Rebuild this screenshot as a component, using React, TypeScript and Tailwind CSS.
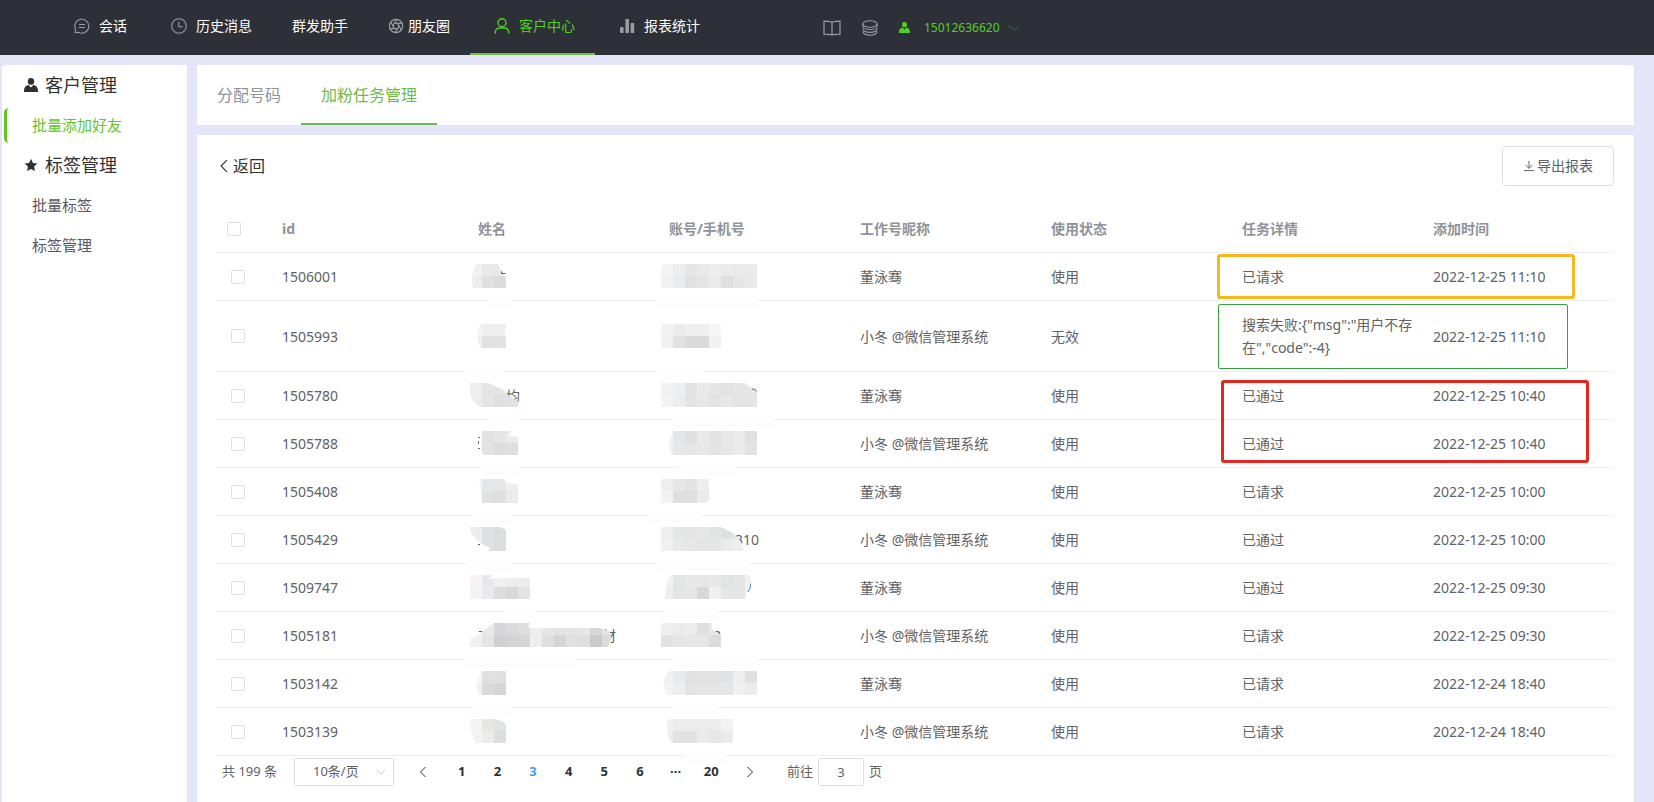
import React, { useId, useState } from "react";
import { Aperture } from "lucide-react";

type IconProps = { className?: string };

const ChatIcon = ({ className }: IconProps) => (
  <svg viewBox="0 0 16 16" className={className} fill="none" stroke="currentColor" strokeWidth="1.1" aria-hidden="true">
    <path d="M1.2 14.8 1.6 11.4A7 7 0 1 1 4.4 14.3Z" strokeLinejoin="round" />
    <path d="M5 6.5h6M5 9.5h6" />
  </svg>
);

const ClockIcon = ({ className }: IconProps) => (
  <svg viewBox="0 0 16 16" className={className} fill="none" stroke="currentColor" strokeWidth="1.1" aria-hidden="true">
    <circle cx="8" cy="8" r="7.3" />
    <path d="M7.8 3.8v4.9h4" />
  </svg>
);

const UserLineIcon = ({ className }: IconProps) => (
  <svg viewBox="0 0 16 16" className={className} fill="none" stroke="currentColor" strokeWidth="1.4" aria-hidden="true">
    <circle cx="8" cy="4.8" r="4" />
    <path d="M1.3 15.6v-1.4A4.2 4.2 0 0 1 5.5 10h5a4.2 4.2 0 0 1 4.2 4.2v1.4" />
  </svg>
);

const BarsIcon = ({ className }: IconProps) => (
  <svg viewBox="0 0 16 16" className={className} fill="currentColor" aria-hidden="true">
    <rect x="1" y="9" width="3.6" height="6" rx=".8" />
    <rect x="6.4" y="1" width="3.6" height="14" rx=".8" />
    <rect x="11.6" y="5" width="3.6" height="10" rx=".8" />
  </svg>
);

const BookIcon = ({ className }: IconProps) => (
  <svg viewBox="0 0 18 16" className={className} fill="none" stroke="currentColor" strokeWidth="1.2" aria-hidden="true">
    <path d="M9 2.2C6.500 1.500 4 1.200 1 1.200v13c3 0 5.500.2 8 .7 2.500-.5 5-.7 8-.7v-13c-3 0-5.500.3-8 1Zm0 0v12.600" strokeLinejoin="round" />
  </svg>
);

const CoinsIcon = ({ className }: IconProps) => (
  <svg viewBox="0 0 16 16" className={className} fill="none" stroke="currentColor" strokeWidth="1.1" aria-hidden="true">
    <ellipse cx="8" cy="4" rx="7.200" ry="3.200" />
    <path d="M.8 4v2.300c0 1.800 3.200 3.200 7.200 3.200s7.200-1.400 7.200-3.200V4" />
    <path d="M1.200 8.300C.5 10.500 3.500 12.400 8 12.400s7.500-1.900 6.800-4.100" />
    <path d="M1.200 11.200C.5 13.400 3.500 15.300 8 15.300s7.500-1.900 6.800-4.100" />
  </svg>
);

const PersonIcon = ({ className }: IconProps) => (
  <svg viewBox="0 0 14 14" className={className} fill="currentColor" aria-hidden="true">
    <ellipse cx="7" cy="3.400" rx="3.200" ry="3.400" />
    <path d="M4.600 6.900 7 9.600l2.400-2.700c2.600.6 4.300 2 4.600 5.100V14H0v-2c.3-3.100 2-4.500 4.600-5.100Z" />
  </svg>
);

const StarIcon = ({ className }: IconProps) => (
  <svg viewBox="0 0 14 14" className={className} fill="currentColor" aria-hidden="true">
    <path d="m7 .8 1.900 4.100 4.500.6-3.300 3.100.8 4.500L7 10.900l-3.900 2.200.8-4.500L.6 5.500l4.500-.6Z" />
  </svg>
);

const ArrowLine = ({ className, d }: IconProps & { d: string }) => (
  <svg viewBox="0 0 12 12" className={className} fill="none" stroke="currentColor" strokeWidth="1" aria-hidden="true">
    <path d={d} />
  </svg>
);

const LEFT = "M8.500 1 3.500 6l5 5";
const RIGHT = "M3.500 1l5 5-5 5";
const DOWN = "M1 3.500l5 5 5-5";

type NavItem = { label: string; icon?: React.ReactNode; tight?: boolean; active?: boolean };

const nav: NavItem[] = [
  { label: "会话", icon: <ChatIcon className="size-4" /> },
  { label: "历史消息", icon: <ClockIcon className="size-4" /> },
  { label: "群发助手" },
  { label: "朋友圈", icon: <Aperture className="size-4" strokeWidth={1.8} />, tight: true },
  { label: "客户中心", icon: <UserLineIcon className="size-4" />, active: true },
  { label: "报表统计", icon: <BarsIcon className="size-4" /> },
];

function TopBar() {
  return (
    <header className="flex h-[55px] shrink-0 items-stretch bg-[#2e3038] pl-[50px] text-sm text-white">
      <nav className="flex">
        {nav.map((item) => (
          <a
            key={item.label}
            href="#"
            className={
              item.active
                ? "flex items-center border-b-2 border-[#6fbf44] px-5 pb-0.5 whitespace-nowrap text-[#4fd01f]"
                : "flex items-center border-b-2 border-transparent px-5 pb-0.5 whitespace-nowrap"
            }
          >
            {item.icon && (
              <span
                className={
                  item.tight
                    ? "mr-1 text-[#9a9ca2]"
                    : item.active
                      ? "mr-[5px] flex w-6 justify-center"
                      : "mr-[5px] flex w-6 justify-center text-[#9a9ca2]"
                }
              >
                {item.icon}
              </span>
            )}
            {item.label}
          </a>
        ))}
      </nav>
      <div className="ml-[103px] flex items-center">
        <button type="button" aria-label="文档" className="text-[#9a9ca2]">
          <BookIcon className="h-4 w-[18px]" />
        </button>
        <button type="button" aria-label="数据" className="ml-[21px] text-[#9a9ca2]">
          <CoinsIcon className="size-4" />
        </button>
        <button type="button" className="ml-[21px] flex items-center text-xs text-[#4fd01f]">
          <PersonIcon className="size-[11px]" />
          <span className="ml-[14px]">15012636620</span>
          <ArrowLine className="ml-2 size-3 text-[#2f7a2a]" d={DOWN} />
        </button>
      </div>
    </header>
  );
}

function SideTitle({ icon, label }: { icon: React.ReactNode; label: string }) {
  return (
    <h2 className="flex h-10 items-center gap-[7px] pl-[22px] text-lg text-[#303133]">
      {icon}
      {label}
    </h2>
  );
}

function SideLink({ label, active }: { label: string; active?: boolean }) {
  return (
    <a
      href="#"
      className={
        active
          ? "flex h-10 items-center gap-6 pl-0.5 text-[15px] text-[#5fc52e]"
          : "flex h-10 items-center gap-6 pl-0.5 text-[15px] text-[#55585e]"
      }
    >
      {active ? (
        <svg viewBox="0 0 4 35" className="h-[35px] w-1" fill="#5fc71e" aria-hidden="true">
          <path d="M4 0Q0 1 0 5V30Q0 34 4 35 3 33 3 30V5Q3 2 4 0Z" />
        </svg>
      ) : (
        <span className="w-1" />
      )}
      {label}
    </a>
  );
}

type Mosaic = {
  top: string;
  bottom: string;
  clip: string;
  gap?: [number, number];
  mark?: { d: string; color: string };
  text?: React.ReactNode;
};

const dark = "#5a5d63";

const names: Mosaic[] = [
  { top: "f1f1f1 e9e9e9 e8e8e8", bottom: "ededed e0e0e1 dcdcdc", clip: "M6 0H28L32 8 36 14V24H3Q0 12 6 0Z", gap: [17, 43], mark: { d: "M31.500 7.500v2h4", color: dark } },
  { top: "f4f4f4 eeeeee eeeeee", bottom: "efefef e1e1e2 e2e2e2", clip: "M10 0H36V4L34 6 36 12V24H11Q4 12 10 0Z", gap: [-6, 33] },
  { top: "eeeeee e5e5e5 e4e4e4 e4e4e4", bottom: "eeeeee e5e5e5 dfdfdf e2e2e2", clip: "M0 0H18L34 7 36 11 48 18V24H10Q1 18 0 10Z", gap: [18, 48], text: <span className="pl-7">均</span> },
  { top: "eeeeee e2e2e4 e5e6ea ebebeb", bottom: "eeeeee e2e2e3 dddddd dfdfdf", clip: "M12 0H42L38 5 48 6V24H13L11 19Z", gap: [10, 50], mark: { d: "M8 6.500h2M8.500 10v3M8 17.500h2", color: "#8a6a5a" } },
  { top: "f4f4f4 e6e7ea e6e7ea eeeeee", bottom: "f4f4f4 e1e1e1 dfdfdf ebebeb", clip: "M9 0H34L36 4 48 5V24H12Z", gap: [2, 42] },
  { top: "ededed dedfe0 dcdddf", bottom: "f0f0f0 dfe0e0 dcddde", clip: "M0 0H30L36 3V24H18L20 21Q2 14 0 0Z", gap: [-5, 42], mark: { d: "M8 17.500h2", color: dark } },
  { top: "f7f5f4 e6e8ef f0f0f0 ededed ededed", bottom: "f5f3f3 e9e9ee dddddd d8d8d8 e4e4e4", clip: "M0 0H22L19 4Q40 2 60 3V24H0Z", gap: [33, 66] },
  {
    top: "f5f5f5 e9e9ea d7d7d9 dadadc dedede eeeeee e6e6e6 e4e4e4 e4e4e4 e6e6e6 d6d6d6 e4e4e4",
    bottom: "f1f1f1 e5e5e5 d0d0d1 d3d3d4 d6d6d6 eeeeee dfdfdf d5d5d5 e1e1e1 dfdfdf cacaca dcdcdc",
    clip: "M0 24V16L10 10 24 0H60L58 5H130L139 8Q144 13 138 24Z",
    gap: [-6, 106],
    text: <span className="flex w-[138px] justify-between"><span>丁</span><span>材</span></span>,
  },
  { top: "f5f5f5 e1e1e1 e0e0e1", bottom: "f1f1f1 dadada d6d6d6", clip: "M12 0H36V24H9Q3 12 12 0Z", gap: [2, 42] },
  { top: "f4f4f4 e8e6e2 e3e4e6", bottom: "f3f3f3 ececec dddee0", clip: "M0 0H24Q32 1 36 5V24H6Q0 14 0 0Z" },
];

const accounts: Mosaic[] = [
  { top: "f5f4f4 eeeeee e6e6e6 e9e9e9 ededed ebebeb e9eaea ebebeb", bottom: "f3f1f1 e9ecee e0e1e2 e5e5e5 eaeaea e0e0e0 e6e6e6 e9ebeb", clip: "M2 0H96V24H0V4Z", gap: [-6, 98] },
  { top: "f3f3f3 ebebeb efefef efefef f7f7f7", bottom: "f1f1f1 e2e2e2 dadada dadada f0f2f1", clip: "M0 0H60V24H0Z", gap: [-6, 42] },
  { top: "f3f2f2 eeeff1 e4e4e4 eaeaea e6e6e6 e2e2e2 e6e6e6 e6e6e6", bottom: "f5f4f4 ecedef e4e4e4 e8e8e8 e3e3e3 e8e8e8 e4e4e4 e4e4e4", clip: "M0 0H84L96 9V24H0Z", gap: [10, 114], mark: { d: "M91 6q4-.5 4.500 2.500", color: dark } },
  { top: "f2f2f2 e4e7ea dedfe0 e9e9ea e4e4e4 e7e7e7 ebebeb e1e1e1", bottom: "f0f0f0 e5e7e8 e6e6e7 e8e8e9 e4e4e4 e7e7e7 ebebeb e3e3e3", clip: "M12 0H96V24H11Q5 12 12 0Z", gap: [17, 75] },
  { top: "efeeee e7e7e8 e4e4e4 eeeeee", bottom: "f2f2f2 dfdfdf dfdfdf ebebeb", clip: "M0 0H48V21L45 24H0Z", gap: [-13, 42] },
  { top: "f1eeee e4e6e7 e5e6e6 e7e7e7 e3e5e5 dee0e2 e4e4e4", bottom: "f1f0f0 e9e9ea e7e7e7 e5e5e5 e3e5e6 ebebeb eeeeee", clip: "M0 0H60L72 6Q82 14 83 24H0Z", gap: [-6, 90], text: <span className="pl-[66px]">310</span> },
  { top: "f1f1f1 e4e6e6 e8e8e8 e7e7e7 e8e8e9 e2e3e3 e5e5e5 f0f2f2", bottom: "efefef e5e5e5 e6e6e6 d8d8d8 f0f0f0 e7e7e7 e5e5e5 efefef", clip: "M10 0H89V6L84 24H4Q4 8 10 0Z", gap: [2, 58], mark: { d: "M89.500 8.500Q90 13 87 17", color: "#5078b8" } },
  { top: "efefef ebebeb ececec e0e0e0 e8e8e8", bottom: "e2e2e2 e5e5e5 e7e7e7 e7e7e7 dcdcdc", clip: "M0 0H50L51 6 60 12V24H0Z", gap: [10, 98], text: <span className="pl-[44px]">8</span> },
  { top: "f1f1f1 e9eaec e1e2e3 e3e3e3 e2e3e5 e1e2e4 eeeeee e0e0e0", bottom: "f3f3f3 eeeeee e3e3e3 e5e5e5 e5e5e5 e5e5e5 f0f0f0 ececec", clip: "M8 0H96V24H6Q-2 12 8 0Z", gap: [10, 58] },
  { top: "f0f0f0 ececec ececec ececec ececec f2f2f2", bottom: "eeeeee e2e2e2 e2e2e2 ebebeb e7e7e7 ebebeb", clip: "M7 0H72V24H10Q4 12 7 0Z", gap: [23, 66] },
];

/** Pixelated block laid over a private value. */
function Masked({ data, tall }: { data: Mosaic; tall: boolean }) {
  const id = useId();
  const rows = [data.top.split(" "), data.bottom.split(" ")];
  return (
    <div className="relative h-[23px] pl-2.5">
      {data.text}
      <svg className="absolute -top-px left-0.5 h-6 w-[150px] overflow-visible" viewBox="0 0 150 24" aria-hidden="true">
        <clipPath id={id}>
          <path d={data.clip} />
        </clipPath>
        {data.gap && (
          <rect x={data.gap[0]} y={tall ? 42 : 32} width={data.gap[1] - data.gap[0]} height={tall ? 8 : 12} rx="3" fill="#fdfdfd" />
        )}
        <g clipPath={`url(#${id})`} shapeRendering="crispEdges">
          {rows.map((cells, r) =>
            cells.map((c, i) => <rect key={`${r}-${i}`} x={i * 12} y={r * 12} width="12" height="12" fill={`#${c}`} />),
          )}
        </g>
        {data.mark && <path d={data.mark.d} fill="none" stroke={data.mark.color} strokeWidth="1" />}
      </svg>
    </div>
  );
}

const A = "董泳骞";
const B = "小冬 @微信管理系统";

const records = [
  { id: "1506001", nick: A, state: "使用", detail: "已请求", time: "2022-12-25 11:10" },
  { id: "1505993", nick: B, state: "无效", detail: '搜索失败:{"msg":"用户不存在","code":-4}', time: "2022-12-25 11:10", tall: true },
  { id: "1505780", nick: A, state: "使用", detail: "已通过", time: "2022-12-25 10:40" },
  { id: "1505788", nick: B, state: "使用", detail: "已通过", time: "2022-12-25 10:40" },
  { id: "1505408", nick: A, state: "使用", detail: "已请求", time: "2022-12-25 10:00" },
  { id: "1505429", nick: B, state: "使用", detail: "已通过", time: "2022-12-25 10:00" },
  { id: "1509747", nick: A, state: "使用", detail: "已通过", time: "2022-12-25 09:30" },
  { id: "1505181", nick: B, state: "使用", detail: "已请求", time: "2022-12-25 09:30" },
  { id: "1503142", nick: A, state: "使用", detail: "已请求", time: "2022-12-24 18:40" },
  { id: "1503139", nick: B, state: "使用", detail: "已请求", time: "2022-12-24 18:40" },
];

const headings = ["姓名", "账号/手机号", "工作号昵称", "使用状态", "任务详情", "添加时间"];

const Check = ({ label }: { label: string }) => (
  <input
    type="checkbox"
    aria-label={label}
    className="block size-3.5 appearance-none rounded-[2px] border border-[#dcdfe6] bg-white checked:border-[#409eff] checked:bg-[#409eff]"
  />
);

function TaskTable() {
  const cell = "border-b border-[#ebeef5] px-2.5 py-3";
  return (
    <div className="relative mt-[19px]">
      <table className="w-full table-fixed border-separate border-spacing-0 text-left text-sm leading-[23px] text-[#606266]">
        <thead className="text-[#909399]">
          <tr>
            <th className={`${cell} w-[55px]`}>
              <Check label="全选" />
            </th>
            <th className={`${cell} w-[196px]`}>id</th>
            {headings.map((h) => (
              <th key={h} className={cell}>
                {h}
              </th>
            ))}
          </tr>
        </thead>
        <tbody>
          {records.map((r, i) => (
            <tr key={r.id}>
              <td className="border-b border-[#ebeef5] py-3 pl-3.5">
                <Check label={r.id} />
              </td>
              <td className={cell}>{r.id}</td>
              <td className="border-b border-[#ebeef5] py-3">
                <Masked data={names[i]} tall={!!r.tall} />
              </td>
              <td className="border-b border-[#ebeef5] py-3">
                <Masked data={accounts[i]} tall={!!r.tall} />
              </td>
              <td className={cell}>{r.nick}</td>
              <td className={cell}>{r.state}</td>
              <td className={cell}>{r.detail}</td>
              <td className={cell}>{r.time}</td>
            </tr>
          ))}
        </tbody>
      </table>
      <div className="pointer-events-none absolute top-[49px] right-[39px] h-[45px] w-[358px] rounded-[3px] border-3 border-[#f5b81f]" />
      <div className="pointer-events-none absolute top-[99px] right-[46px] h-[65px] w-[350px] rounded-[2px] border border-[#35a03c]" />
      <div className="pointer-events-none absolute top-[175px] right-[25px] h-[83px] w-[368px] rounded-[3px] border-3 border-[#e4261d]" />
    </div>
  );
}

function Pagination() {
  const [page, setPage] = useState("3");
  return (
    <div className="mt-0.5 flex h-7 items-center pl-[5px] text-[13px] text-[#606266]">
      <span className="w-[72px] whitespace-nowrap">共 199 条</span>
      <div className="relative">
        <select
          aria-label="每页条数"
          className="h-7 w-[100px] appearance-none rounded-[3px] border border-[#dcdfe6] bg-white pl-[18px] outline-none"
        >
          <option>10条/页</option>
        </select>
        <ArrowLine className="pointer-events-none absolute top-[9px] right-2 size-2.5 text-[#c0c4cc]" d={DOWN} />
      </div>
      <button type="button" aria-label="上一页" className="ml-3 flex w-[34px] justify-center text-[#303133]">
        <ArrowLine className="size-3" d={LEFT} />
      </button>
      <div className="ml-1 flex w-[285px] font-bold text-[#303133]">
        {["1", "2", "3", "4", "5", "6", "···", "20"].map((p) => (
          <button key={p} type="button" onClick={() => p !== "···" && setPage(p)} className={p === page ? "flex-1 text-[#409eff]" : "flex-1"}>
            {p}
          </button>
        ))}
      </div>
      <button type="button" aria-label="下一页" className="ml-1 flex w-[34px] justify-center text-[#303133]">
        <ArrowLine className="size-3" d={RIGHT} />
      </button>
      <label className="ml-5 flex items-center gap-[5px] whitespace-nowrap">
        前往
        <input
          value={page}
          onChange={(e) => setPage(e.target.value)}
          className="h-7 w-[46px] rounded-[3px] border border-[#dcdfe6] bg-white text-center outline-none"
        />
        页
      </label>
    </div>
  );
}

export default function App() {
  return (
    <div className="flex min-h-screen flex-col bg-[#e4e5f9] font-['Noto_Sans','Noto_Sans_CJK_SC',sans-serif]">
      <TopBar />
      <div className="flex flex-1 gap-2.5 pt-2.5 pr-5 pl-0.5">
        <aside className="w-[185px] shrink-0 rounded-tl bg-white">
          <SideTitle icon={<PersonIcon className="size-3.5" />} label="客户管理" />
          <SideLink label="批量添加好友" active />
          <SideTitle icon={<StarIcon className="size-3.5" />} label="标签管理" />
          <SideLink label="批量标签" />
          <SideLink label="标签管理" />
        </aside>
        <main className="flex min-w-0 flex-1 flex-col gap-2.5">
          <nav className="flex h-[60px] rounded-tr bg-white text-base">
            <a href="#" className="flex items-center border-b-2 border-transparent px-5 pt-0.5 text-[#909399]">
              分配号码
            </a>
            <a href="#" className="flex items-center border-b-2 border-[#6fb558] px-5 pt-0.5 text-[#6dbb4b]">
              加粉任务管理
            </a>
          </nav>
          <section className="flex-1 bg-white px-5 pt-[11px]">
            <div className="flex h-10 items-center justify-between">
              <a href="#" className="flex items-center gap-0.5 text-base text-[#303133]">
                <ArrowLine className="size-3.5" d={LEFT} />
                返回
              </a>
              <button
                type="button"
                className="flex h-10 items-center gap-0.5 rounded border border-[#dcdfe6] bg-white px-5 text-sm text-[#606266]"
              >
                <ArrowLine className="size-3" d="M6 .8v7.400M2.500 5 6 8.400 9.500 5M.8 10.600h10.400" />
                导出报表
              </button>
            </div>
            <TaskTable />
            <Pagination />
          </section>
        </main>
      </div>
    </div>
  );
}
